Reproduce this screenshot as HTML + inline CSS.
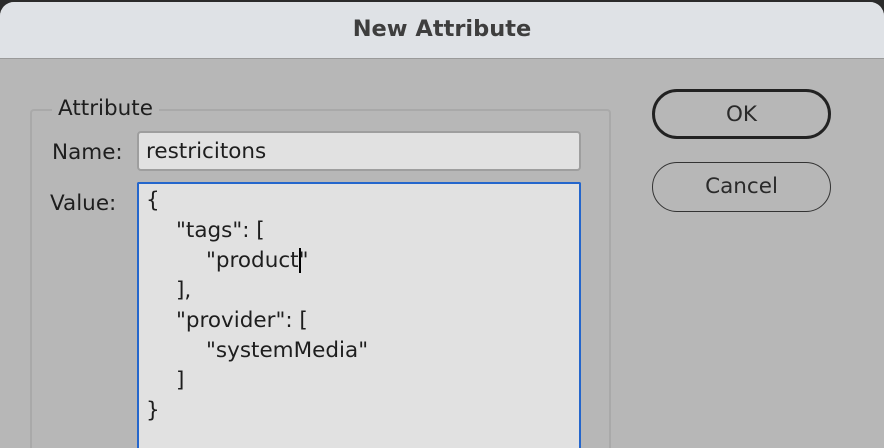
<!DOCTYPE html>
<html><head><style>
*{margin:0;padding:0;box-sizing:border-box}
html,body{width:884px;height:448px;overflow:hidden}
body{background:#2b2b2b;font-family:"DejaVu Sans","Liberation Sans",sans-serif;color:#1e1e1e}
.wrap{position:relative;width:884px;height:448px;overflow:hidden}
.win{position:absolute;left:0;top:2px;width:884px;height:446px;background:#b7b7b7;border-radius:14px 14px 0 0;overflow:hidden}
.title{position:absolute;left:0;top:0;width:884px;height:57px;background:#dfe2e6;border-bottom:1px solid #9a9a9a;text-align:center;font-weight:bold;font-size:22.5px;line-height:54px;color:#3e3e3e}
.fs{position:absolute;left:30px;top:109px;width:581px;height:339px;border:2px solid #a9a9a9;border-bottom:none;border-radius:4px 4px 0 0}
.legend{position:absolute;left:52px;top:96px;background:#b7b7b7;padding:0 6px;font-size:21.5px;line-height:26px}
.lbl{position:absolute;font-size:21.5px}
.inp{position:absolute;left:137px;width:444px;background:#e1e1e1;border:2px solid #9e9e9e;border-radius:4px}
.ta{border:2px solid #2466cc;border-bottom:none;border-radius:2px 2px 0 0}
.code{position:absolute;left:146px;top:186px;font-size:21.5px;line-height:30px;white-space:nowrap}
.code div{height:30px}
.btn{position:absolute;left:652px;width:179px;height:50px;border-radius:25px;text-align:center;font-size:21.5px;line-height:46px;color:#2a2a2a}
</style></head><body><div class="wrap">
<div class="win">
<div class="title">New Attribute</div>
</div>
<div class="fs"></div>
<div class="legend">Attribute</div>
<div class="lbl" style="left:52px;top:140px">Name:</div>
<div class="inp" style="top:131px;height:40px;font-size:21.5px;line-height:38px;padding-left:7px">restricitons</div>
<div class="lbl" style="left:50px;top:191px">Value:</div>
<div class="inp ta" style="top:182px;height:266px"></div>
<div class="code">
<div>{</div>
<div style="padding-left:30px">"tags": [</div>
<div style="padding-left:60px">"product<span style="border-right:2px solid #000;margin-right:-2px"></span>"</div>
<div style="padding-left:30px">],</div>
<div style="padding-left:30px">"provider": [</div>
<div style="padding-left:60px">"systemMedia"</div>
<div style="padding-left:30px">]</div>
<div>}</div>
</div>
<div class="btn" style="top:89px;border:3px solid #222">OK</div>
<div class="btn" style="top:162px;border:1.5px solid #333;line-height:47px">Cancel</div>
</div></body></html>
